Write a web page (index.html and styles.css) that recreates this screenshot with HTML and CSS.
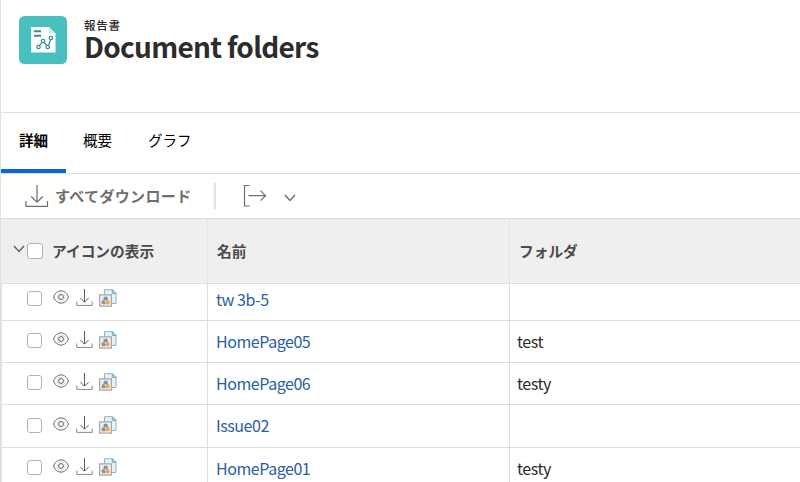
FILE: index.html
```html
<!DOCTYPE html>
<html lang="ja">
<head>
<meta charset="utf-8">
<title>Document folders</title>
<link rel="stylesheet" href="styles.css">
</head>
<body>
<svg class="defs" width="0" height="0">
  <symbol id="eye" viewBox="0 0 16 14">
    <path d="M.6 7C2 3 4.800.9 8 .9s6 2.100 7.400 6.100C14 11 11.200 13.100 8 13.100S2 11 .6 7z"/>
    <circle cx="8" cy="7" r="4" stroke-width=".7" stroke-opacity=".3"/>
    <circle cx="8" cy="7" r="2.400"/>
  </symbol>
  <symbol id="save" viewBox="0 0 17 17">
    <path d="M8.500 0v13M4.400 9l4.100 4.200L12.600 9"/>
    <path class="tray" d="M.8 12.500v3.900h15.400v-3.900"/>
  </symbol>
  <symbol id="docs" viewBox="0 0 18 18">
    <path d="M5.500.7h8l3.500 3.500v10.300H5.500z" fill="#e4f1f7" stroke="#8fb3c3"/>
    <path d="M13.300.7v3.700H17z" fill="#b9d9e8" stroke="#7fa9bc"/>
    <path d="M.6 5.800h11.800v11.400H.6z" fill="#f1eee9" stroke="#aaa7a5" stroke-width="1.200"/>
    <circle cx="4.700" cy="13.200" r="2.200" fill="#92959b" stroke="none"/>
    <circle cx="8.600" cy="13.200" r="2.200" fill="#f4a94a" stroke="none"/>
    <circle cx="6.700" cy="9.800" r="2.300" fill="#6d9cc3" stroke="none"/>
    <circle cx="6.600" cy="12" r=".9" fill="#dce4ea" stroke="none"/>
  </symbol>
</svg>
<main class="page">
  <header class="header">
    <svg class="logo" viewBox="0 0 48 48">
      <rect width="48" height="48" rx="5.500" fill="#47c0bf"/>
      <path d="M12 11h18l6.500 6.500V36.500H12z" fill="#fff"/>
      <path d="M30 11l6.500 6.500H30z" fill="#c5eae9"/>
      <path d="M15 15.200h7M15 19.800h7" stroke="#318f92" stroke-width="2"/>
      <g fill="#fff" stroke="#318f92" stroke-width="1.200">
        <path d="M19.500 31l4.500-6 5 6 3-8.500" fill="none"/>
        <circle cx="19.500" cy="31" r="1.700"/><circle cx="24" cy="25" r="1.700"/>
        <circle cx="28.700" cy="31" r="1.700"/><circle cx="31.900" cy="22" r="1.700"/>
      </g>
    </svg>
    <div class="heading">
      <div class="kind">報告書</div>
      <h1>Document folders</h1>
    </div>
  </header>
  <nav class="tabs">
    <a class="tab active">詳細</a>
    <a class="tab">概要</a>
    <a class="tab">グラフ</a>
  </nav>
  <div class="toolbar">
    <svg class="download" viewBox="0 0 24 24"><path d="M12 1v17M6.200 12.500L12 18.200l5.800-5.700M1 17v5.300h21.500V17"/></svg>
    <span class="label">すべてダウンロード</span>
    <span class="divider"></span>
    <svg class="export" viewBox="0 0 24 24"><path d="M6.500 1.500h-5v20.500h5M5.500 11.700h17M17.500 6.700l5 5-5 5"/></svg>
    <svg class="caret" viewBox="0 0 12 8"><path d="M1 1l5 5.500L11 1"/></svg>
  </div>
  <section class="table">
    <div class="row head">
      <div class="cell tools">
        <svg class="chevron" viewBox="0 0 12 8"><path d="M1 1l5 5.500L11 1"/></svg>
        <span class="box"></span><span class="caption">アイコンの表示</span>
      </div>
      <div class="cell">名前</div>
      <div class="cell">フォルダ</div>
    </div>
    <div class="row first">
      <div class="cell tools"><span class="box"></span><svg class="eye"><use href="#eye"/></svg><svg class="save"><use href="#save"/></svg><svg class="docs"><use href="#docs"/></svg></div>
      <div class="cell"><a>tw 3b-5</a></div><div class="cell"></div>
    </div>
    <div class="row">
      <div class="cell tools"><span class="box"></span><svg class="eye"><use href="#eye"/></svg><svg class="save"><use href="#save"/></svg><svg class="docs"><use href="#docs"/></svg></div>
      <div class="cell"><a>HomePage05</a></div><div class="cell">test</div>
    </div>
    <div class="row">
      <div class="cell tools"><span class="box"></span><svg class="eye"><use href="#eye"/></svg><svg class="save"><use href="#save"/></svg><svg class="docs"><use href="#docs"/></svg></div>
      <div class="cell"><a>HomePage06</a></div><div class="cell">testy</div>
    </div>
    <div class="row tall">
      <div class="cell tools"><span class="box"></span><svg class="eye"><use href="#eye"/></svg><svg class="save"><use href="#save"/></svg><svg class="docs"><use href="#docs"/></svg></div>
      <div class="cell"><a>Issue02</a></div><div class="cell"></div>
    </div>
    <div class="row">
      <div class="cell tools"><span class="box"></span><svg class="eye"><use href="#eye"/></svg><svg class="save"><use href="#save"/></svg><svg class="docs"><use href="#docs"/></svg></div>
      <div class="cell"><a>HomePage01</a></div><div class="cell">testy</div>
    </div>
  </section>
</main>
</body>
</html>
```
FILE: styles.css
```css
* { box-sizing: border-box; }
body {
  margin: 0;
  background: #fff;
  font-family: "Noto Sans CJK JP", sans-serif;
  color: #2c2c2c;
}
svg { display: block; flex: none; fill: none; }
.defs { display: none; }
.page {
  height: 482px;
  overflow: hidden;
  border-left: 1px solid #e1e1e1;
}
.header {
  display: flex;
  height: 113px;
  padding: 16px 0 0 18px;
  border-bottom: 1px solid #dfdfdf;
}
.logo { width: 48px; height: 48px; }
.heading { margin-left: 17px; white-space: nowrap; }
.kind {
  height: 16px;
  margin-top: 1px;
  font-size: 11.500px;
  line-height: 16px;
  font-weight: 500;
  letter-spacing: .7px;
}
h1 {
  margin: -3px 0 0;
  font-size: 28px;
  line-height: 32px;
  font-weight: 700;
  letter-spacing: -.72px;
}
.tabs {
  display: flex;
  height: 61px;
  border-bottom: 1px solid #dfdfdf;
}
.tab {
  padding: 0 18px 0 17px;
  height: 60px;
  font-size: 14.500px;
  line-height: 54px;
  color: #000;
  white-space: nowrap;
}
.tab:last-child { padding-left: 18px; }
.tab.active {
  width: 65px;
  padding-left: 18px;
  font-weight: 700;
  border-bottom: 4px solid #0d66d0;
}
.toolbar {
  display: flex;
  align-items: center;
  height: 45px;
  padding-left: 24px;
  border-bottom: 1px solid #dcdcdc;
  stroke: #6e6e6e;
  stroke-width: 1.200;
}
.download { width: 24px; height: 24px; }
.label {
  width: 136px;
  margin: -2px 0 0 6px;
  font-size: 15px;
  font-weight: 700;
  letter-spacing: .35px;
  color: #6e6e6e;
  white-space: nowrap;
}
.divider { width: 2px; height: 26px; margin-left: 23px; background: #e3e3e3; }
.export { width: 24px; height: 24px; margin-left: 27px; }
.caret { width: 12px; height: 8px; margin: 3px 0 0 17px; stroke-width: 1.500; }
.row {
  display: grid;
  grid-template-columns: 207px 302px 1fr;
  height: 42px;
  font-size: 16px;
  line-height: 24px;
  letter-spacing: -.45px;
}
.row.first { height: 37px; }
.row.tall { height: 43px; }
.cell {
  display: flex;
  align-items: flex-end;
  padding: 0 0 9px 8px;
  border-right: 1px solid #dcdcdc;
  border-bottom: 1px solid #dcdcdc;
  white-space: nowrap;
}
.cell:last-child { padding-left: 7px; border-right: 0; }
.tools {
  padding: 0 0 14px 25px;
  border-left: 1px solid #e1e1e1;
}
.tall .cell { padding-bottom: 10px; }
.tall .tools { padding-bottom: 14px; }
.box {
  width: 15px;
  height: 15px;
  border: 1px solid #b3b3b3;
  border-radius: 3px;
  background: #fff;
}
.tools svg { stroke: #5a5e6b; }
.eye { width: 16px; height: 14px; margin: 0 0 2px 11px; }
.save { width: 17px; height: 17px; margin: 0 0 0 7px; }
.docs { width: 18px; height: 18px; margin: 0 0 -1px 6px; }
.tray { stroke: #85888f; }
a { color: #2860a5; }
.row.head {
  height: 65px;
  font-size: 14.700px;
  font-weight: 700;
  letter-spacing: 0;
  color: #4b4b4b;
  background: #efefef;
}
.head .cell {
  align-items: center;
  padding: 0 0 0 9px;
  border-right-color: #e5e5e5;
}
.head .tools { padding-left: 12px; border-left: 0; }
.head .box { width: 16px; height: 16px; margin-left: 2px; }
.chevron { width: 12px; height: 8px; margin-bottom: 4px; stroke-width: 1.400; }
.caption { margin-left: 9px; }
```
